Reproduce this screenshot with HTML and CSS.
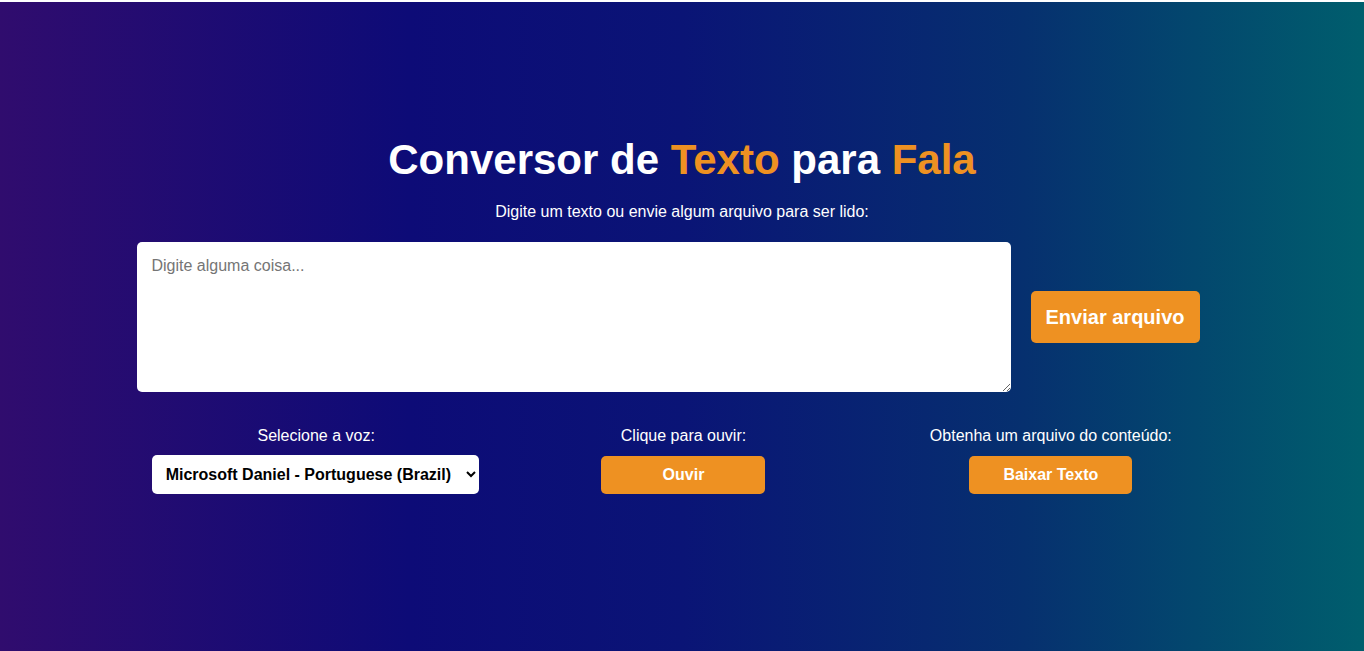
FILE: index.html
```html
<!DOCTYPE html>
<html lang="pt-BR">
<head>
<meta charset="utf-8">
<title>Conversor de Texto para Fala</title>
<link rel="stylesheet" href="styles.css">
</head>
<body>
<main class="page">
  <h1 class="title">Conversor de <span class="accent">Texto</span> para <span class="accent">Fala</span></h1>
  <p class="subtitle">Digite um texto ou envie algum arquivo para ser lido:</p>
  <div class="input-row">
    <textarea class="text-input" placeholder="Digite alguma coisa..."></textarea>
    <button class="btn btn-upload" type="button">Enviar arquivo</button>
  </div>
  <div class="controls">
    <div class="control">
      <label class="control-label" for="voz">Selecione a voz:</label>
      <select id="voz" class="voice-select">
        <option>Microsoft Daniel - Portuguese (Brazil)</option>
      </select>
    </div>
    <div class="control">
      <span class="control-label">Clique para ouvir:</span>
      <button class="btn btn-small btn-listen" type="button">Ouvir</button>
    </div>
    <div class="control">
      <span class="control-label">Obtenha um arquivo do conteúdo:</span>
      <button class="btn btn-small btn-download" type="button">Baixar Texto</button>
    </div>
  </div>
</main>
</body>
</html>
```

FILE: styles.css
```css
html {
  background: #ffffff;
}
body {
  margin: 0;
  font-family: "Liberation Sans", Arial, sans-serif;
}
.page {
  margin-top: 2px;
  min-height: 649px;
  box-sizing: border-box;
  padding-top: 134px;
  background: linear-gradient(90deg, #300c6e 0%, #0d0b77 30%, #0a1476 50%, #06306f 75%, #005e6d 100%);
  color: #ffffff;
  display: flex;
  flex-direction: column;
  align-items: center;
}
.title {
  margin: 0;
  font-size: 42px;
  line-height: 48px;
  font-weight: 700;
  text-align: center;
}
.accent {
  color: #ee9122;
}
.subtitle {
  margin: 19px 0 21px;
  font-size: 16px;
  line-height: 18px;
}
.input-row {
  width: 1091px;
  display: flex;
  align-items: center;
}
.text-input {
  width: 874px;
  height: 150px;
  box-sizing: border-box;
  padding: 15px;
  border: none;
  border-radius: 5px;
  font-family: "Liberation Sans", Arial, sans-serif;
  font-size: 16px;
  line-height: 18px;
  color: #000;
  background: #fff;
  outline: none;
}
.text-input::placeholder {
  color: #757575;
}
.btn {
  border: none;
  border-radius: 5px;
  background: #ee9122;
  color: #ffffff;
  font-family: "Liberation Sans", Arial, sans-serif;
  font-weight: 700;
  cursor: pointer;
}
.btn-upload {
  margin-left: 20px;
  width: 169px;
  height: 52px;
  font-size: 20px;
}
.controls {
  margin-top: 35px;
  margin-left: 3px;
  width: 1102px;
  display: grid;
  grid-template-columns: repeat(3, 1fr);
}
.control {
  display: flex;
  flex-direction: column;
  align-items: center;
  gap: 10px;
}
.control-label {
  font-size: 16px;
  line-height: 18px;
}
.voice-select {
  width: 327px;
  height: 39px;
  margin-right: 2px;
  padding: 0 8px 0 10px;
  border: none;
  border-radius: 5px;
  background: #ffffff;
  color: #000;
  font-family: "Liberation Sans", Arial, sans-serif;
  font-size: 16px;
  font-weight: 700;
}
.btn-small {
  margin-top: 1px;
  height: 38px;
  font-size: 16px;
}
.btn-listen {
  width: 164px;
}
.btn-download {
  width: 163px;
}
```
